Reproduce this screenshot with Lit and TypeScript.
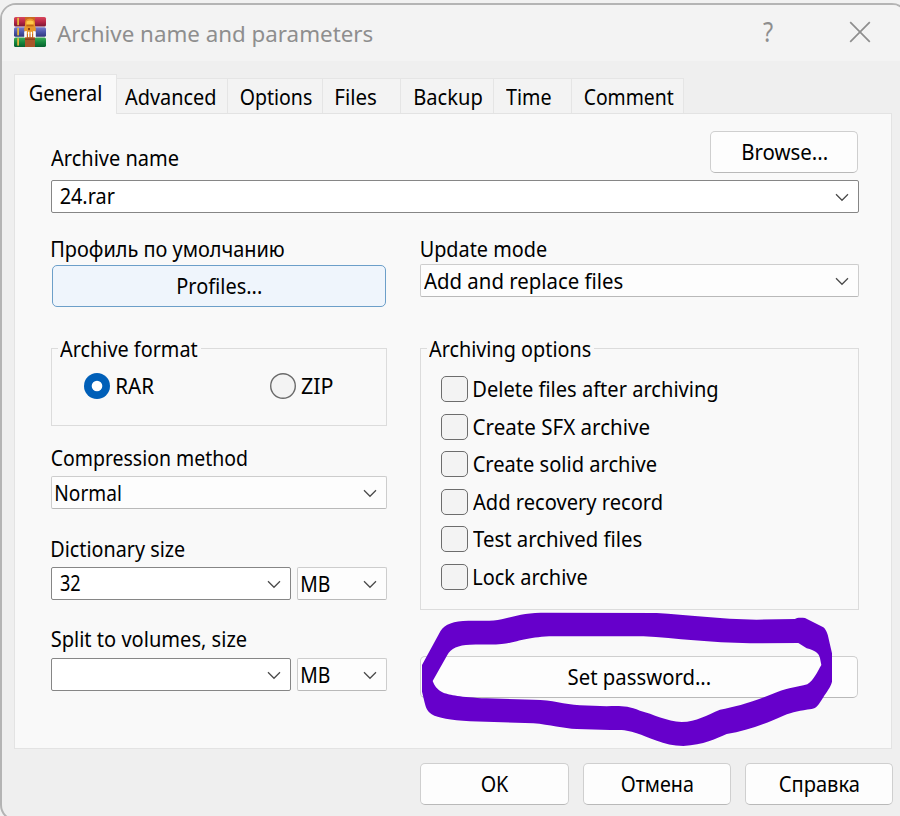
import { LitElement, html, css, svg } from "lit";
import { customElement, property, state } from "lit/decorators.js";
import { classMap } from "lit/directives/class-map.js";
import { styleMap } from "lit/directives/style-map.js";

/** A single line of text whose visible glyphs span exactly `ink` pixels. */
@customElement("fit-text")
class FitText extends LitElement {
  static styles = css`
    :host { display: inline-block; flex: none; white-space: nowrap; line-height: 28px; height: 28px; }
    .line { display: block; width: 0; transform-origin: 0 0; }
  `;
  @property() text = "";
  @property({ type: Number }) ink = 0;
  @state() private ratio = 1;
  @state() private shift = 0;

  firstUpdated() {
    this.measure();
    document.fonts.ready.then(() => this.measure());
  }

  private measure() {
    const cs = getComputedStyle(this);
    const ctx = document.createElement("canvas").getContext("2d")!;
    ctx.font = `${cs.fontWeight} ${cs.fontSize} ${cs.fontFamily}`;
    const m = ctx.measureText(this.text);
    this.ratio = (this.ink - 0.6) / (m.actualBoundingBoxRight + m.actualBoundingBoxLeft);
    // Keep part of the first glyph's side bearing.
    this.shift = m.actualBoundingBoxLeft * this.ratio * 0.4;
  }

  render() {
    return html`<style>:host { width: ${this.ink}px; }</style><span class="line"
      style=${styleMap({ transform: `translateX(${this.shift}px) scaleX(${this.ratio})` })}>${this.text}</span>`;
  }
}

const t = (text: string, ink: number) => html`<fit-text .text=${text} .ink=${ink}></fit-text>`;

const chevron = html`<svg class="chev" width="14" height="9" viewBox="0 0 14 9">
  <path d="M1 1.3 L7 7.3 L13 1.3" fill="none" stroke="#4a4a4a" stroke-width="1.25"/></svg>`;

const book = (y: number, id: string) => svg`
  <rect x="0" y=${y} width="32" height="9.6" rx="1.6" fill=${`url(#${id})`}/>
  <rect x="3.2" y=${y + 0.8} width="1.8" height="7.4" fill="#e5b53c"/>`;

const shade = (id: string, a: string, b: string, c: string) => svg`
  <linearGradient id=${id} x1="0" y1="0" x2="0" y2="1">
    <stop offset="0" stop-color=${a}/><stop offset=".5" stop-color=${b}/><stop offset="1" stop-color=${c}/>
  </linearGradient>`;

const TABS: [string, number, number, number][] = [
  ["Advanced", 91, 111, 8],
  ["Options", 72, 95, 12],
  ["Files", 41, 78, 12],
  ["Backup", 68, 93, 12.5],
  ["Time", 46, 78, 12],
  ["Comment", 90, 112, 12],
];

const OPTIONS: [string, number][] = [
  ["Delete files after archiving", 244],
  ["Create SFX archive", 177],
  ["Create solid archive", 184],
  ["Add recovery record", 189.5],
  ["Test archived files", 169.5],
  ["Lock archive", 114],
];

@customElement("app-root")
class AppRoot extends LitElement {
  static styles = css`
    :host {
      display: block; width: 900px; height: 816px; overflow: hidden; position: relative;
      background: #f1f1f1; color: #000;
      font-family: "Noto Sans", "Open Sans", sans-serif; font-size: 21.6px;
    }
    * { box-sizing: border-box; }
    .window {
      width: 908px; height: 818px; margin-top: 3px; padding: 0 14px 0 12px;
      border: 2px solid #b4b4b4; border-radius: 16px; background: #efefef;
      display: flex; flex-direction: column; overflow: hidden;
    }
    .title {
      height: 56px; flex: none; margin: 0 -14px 0 -12px; padding: 12px 0 0 11px;
      background: #f3f3f3; color: #8e8e8e; font-size: 22.6px;
      display: flex; align-items: flex-start;
    }
    .title fit-text { display: block; }
    .name { margin: 3px 0 0 10px; }
    .help { margin: 1px 0 0 390px; font-size: 27px; }
    .close { margin: 4px 0 0 75px; }
    .tabs { display: flex; align-items: flex-end; height: 52px; flex: none; }
    .tab {
      height: 35px; border: 1px solid #e5e5e5; border-width: 1px 1px 0 0; background: #f3f3f3;
      display: flex; padding-top: 4px;
    }
    .tab.active {
      height: 40px; width: 103px; background: #f9f9f9; border-left-width: 1px;
      padding: 4px 0 0 14px; margin-bottom: -1px; z-index: 1;
    }
    .panel {
      width: 878px; height: 636px; flex: none; background: #f9f9f9; border: 1px solid #e3e3e3;
      padding: 17px 32px 0 36px;
    }
    .top { display: flex; justify-content: space-between; align-items: flex-start; }
    .top .caption { margin-top: 13px; }
    .caption { display: flex; height: 28px; }
    .btn {
      height: 42px; width: 149px; border: 1px solid #cfcfcf; border-bottom-color: #b9b9b9;
      border-radius: 5px; background: #fdfdfd; padding-top: 6px;
      display: flex; justify-content: center; flex: none;
    }
    .browse { width: 148px; margin-right: 1px; }
    .profiles { width: 334px; margin: 2px 0 0 1px; background: #eff5fc; border-color: #6c9fc9; }
    .combo {
      height: 33px; border: 1px solid #cdcdcd; border-bottom-color: #b9b9b9; border-radius: 2px;
      background: #fdfdfd; padding: 2px 9px 0 3px;
      display: flex; justify-content: space-between; flex: 1;
    }
    .combo.edit { border-color: #868686; background: #fff; padding: 1px 9px 0 8px; }
    .chev { margin: 10px 0 0 auto; flex: none; }
    .edit .chev { margin-top: 11px; }
    .unit { flex: none; width: 90px; }
    .line { display: flex; }
    .line.pair { gap: 6px; }
    .line.name-row { margin-top: 7px; }
    .cols { display: grid; grid-template-columns: 336px 439px; column-gap: 33px; margin-top: 22px; }
    .group { border: 1px solid #dcdcdc; position: relative; }
    .legend { position: absolute; top: -14px; left: 6px; padding: 0 2px; background: #f9f9f9; height: 28px; display: flex; }
    .format { height: 78px; margin-top: 41px; display: flex; padding: 23px 0 0 32px; }
    .radio { display: flex; gap: 6px; }
    .radio svg { margin-top: 1px; }
    .radio + .radio { margin-left: 116px; gap: 5px; }
    .m1 { margin-top: 1px; } .m4 { margin-top: 4px; } .m5 { margin-top: 5px; }
    .m18 { margin-top: 18px; } .m25 { margin-top: 25px; } .m26 { margin-top: 26px; }
    .options { height: 262px; margin-top: 51px; padding: 26px 0 0 20px; }
    .option { display: flex; height: 37.55px; gap: 5px; }
    .box { width: 27px; height: 26px; border: 1.5px solid #6d6d6d; border-radius: 5px; background: #f3f3f3; flex: none; margin-top: 1px; }
    .password { width: 438px; margin-top: 46px; }
    .footer { display: flex; margin: 14px 0 0 406px; gap: 14px; }
    .footer .btn:nth-child(n+2) { width: 148px; }
    .ink { position: absolute; left: 410px; top: 600px; }
  `;

  render() {
    return html`
      <div class="window">
        <header class="title">
          <svg width="34" height="31" viewBox="0 0 34 31">
            <defs>
              ${shade("red", "#d9485c", "#b92747", "#7a1634")}
              ${shade("blue", "#7b7dce", "#4b55a9", "#30377c")}
              ${shade("green", "#3fae58", "#16883e", "#07602f")}
            </defs>
            <g transform="translate(1 0)">
              ${book(0, "red")}${book(10.2, "blue")}${book(20.4, "green")}
              <rect x="11" y="0" width="10" height="30" fill="#c96922"/>
              <path d="M11 8 Q10.7 1.8 16 1.6 Q21.3 1.8 21 8 L22 13 L20 17 H12 L10 13Z" fill="#e8972a"/>
              <path d="M12.5 4.5 Q16 2.5 19.5 4.5 V7 H12.5Z" fill="#ffc94a"/>
              <rect x="12.4" y="8" width="7.2" height="1.4" fill="#c06a18"/>
              <rect x="14" y="11" width="2" height="2.2" fill="#8b3c12"/>
              <path d="M10.2 14.5 L12.8 14 V20.4 H10.2Z M21.8 14.5 L19.2 14 V20.4 H21.8Z" fill="#fff"/>
              <rect x="14" y="14.8" width="1.4" height="5.4" fill="#fff"/>
              <rect x="16.6" y="14.8" width="1.4" height="5.4" fill="#fff"/>
              <rect x="11" y="20.6" width="10" height="9.4" fill="#a9552a"/>
              <path d="M11 22.2 H21" stroke="#7d3412" stroke-width=".9"/>
            </g>
          </svg>
          <div class="name">${t("Archive name and parameters", 316)}</div>
          <div class="help">${t("?", 11)}</div>
          <svg class="close" width="22" height="22" viewBox="0 0 22 22">
            <path d="M1.2 1.2 L20.8 20.8 M20.8 1.2 L1.2 20.8" stroke="#8e8e8e" stroke-width="1.7"/>
          </svg>
        </header>

        <nav class="tabs">
          <div class="tab active">${t("General", 72)}</div>
          ${TABS.map(([name, ink, width, pad]) => html`
            <div class=${classMap({ tab: true })} style=${styleMap({ width: `${width}px`, paddingLeft: `${pad}px` })}>${t(name, ink)}</div>`)}
        </nav>

        <main class="panel">
          <div class="top">
            <div class="caption">${t("Archive name", 128.5)}</div>
            <div class="btn browse">${t("Browse...", 85)}</div>
          </div>
          <div class="line name-row"><div class="combo edit">${t("24.rar", 55)}${chevron}</div></div>

          <div class="cols">
            <section>
              <div class="caption">${t("Профиль по умолчанию", 233)}</div>
              <div class="btn profiles">${t("Profiles...", 84)}</div>
              <div class="group format">
                <div class="legend">${t("Archive format", 138.5)}</div>
                <div class="radio">
                  <svg width="26" height="26" viewBox="0 0 26 26">
                    <circle cx="13" cy="13" r="13" fill="#005fb8"/><circle cx="13" cy="13" r="5.3" fill="#fff"/>
                  </svg>
                  ${t("RAR", 38)}
                </div>
                <div class="radio">
                  <svg width="26" height="26" viewBox="0 0 26 26">
                    <circle cx="13" cy="13" r="12.3" fill="#f3f3f3" stroke="#6a6a6a" stroke-width="1.4"/>
                  </svg>
                  ${t("ZIP", 32)}
                </div>
              </div>
              <div class="caption m18">${t("Compression method", 196)}</div>
              <div class="line m4"><div class="combo">${t("Normal", 65)}${chevron}</div></div>
              <div class="caption m26">${t("Dictionary size", 133.5)}</div>
              <div class="line pair m4">
                <div class="combo edit">${t("32", 21)}${chevron}</div>
                <div class="combo unit">${t("MB", 28)}${chevron}</div>
              </div>
              <div class="caption m25">${t("Split to volumes, size", 196)}</div>
              <div class="line pair m5">
                <div class="combo edit">${chevron}</div>
                <div class="combo unit">${t("MB", 28)}${chevron}</div>
              </div>
            </section>

            <section>
              <div class="caption">${t("Update mode", 127)}</div>
              <div class="line m1"><div class="combo">${t("Add and replace files", 199.5)}${chevron}</div></div>
              <div class="group options">
                <div class="legend">${t("Archiving options", 162.5)}</div>
                ${OPTIONS.map(([name, ink]) => html`
                  <div class="option"><span class="box"></span>${t(name, ink)}</div>`)}
              </div>
              <div class="btn password">${t("Set password...", 142.5)}</div>
            </section>
          </div>
        </main>

        <footer class="footer">
          <div class="btn">${t("OK", 28)}</div>
          <div class="btn">${t("Отмена", 72)}</div>
          <div class="btn">${t("Справка", 80)}</div>
        </footer>
      </div>

      <svg class="ink" width="490" height="216" viewBox="0 0 1470 648">
        <path fill="#6600cb" fill-rule="evenodd" d="M36 195 L92 92 C105 72 130 63 175 62 C220 62 250 64 275 58 C320 46 350 38 410 38 L740 39 C830 44 930 58 1040 59 L1155 57 C1160 52 1175 53 1185 54 L1240 82 C1250 90 1254 105 1258 125 L1266 160 V245 C1262 262 1250 275 1240 292 C1225 315 1220 325 1205 327 C1170 332 1150 335 1120 347 C1070 370 1010 392 950 402 C920 415 880 435 820 438 C760 438 715 410 680 400 C655 390 635 389 600 390 L500 387 C460 386 420 374 370 370 L180 364 C120 360 85 355 65 343 C48 332 46 315 42 300 L36 275 Z
        M68 243 L112 165 C122 145 145 135 180 134 C220 132 245 135 275 132 C320 128 350 110 430 109 L700 109 C800 115 900 128 1020 130 L1165 129 L1190 145 C1215 152 1226 158 1230 175 L1234 195 C1222 215 1212 240 1192 253 C1160 262 1140 262 1100 277 C1030 305 980 320 930 329 C890 345 860 365 815 366 C770 364 730 342 690 332 C650 316 625 318 590 319 L510 316 C460 312 430 300 370 299 L230 295 C150 291 120 285 100 278 C80 268 74 258 68 243 Z"/>
      </svg>
    `;
  }
}
